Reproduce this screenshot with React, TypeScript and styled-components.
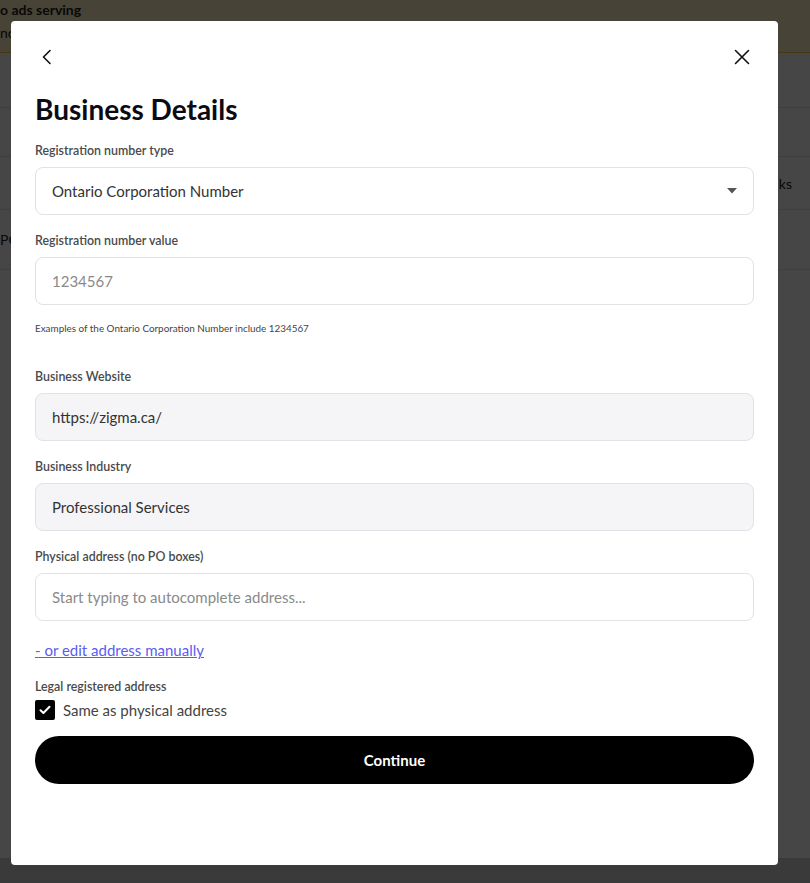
import React from "react";
import styled, { createGlobalStyle } from "styled-components";

const Global = createGlobalStyle`
  html, body { margin: 0; padding: 0; }
  body {
    width: 810px; height: 883px; overflow: hidden;
    font-family: Lato, "Open Sans", sans-serif;
    background: #f3f3f3;
  }
  * { box-sizing: border-box; }
`;

const Page = styled.div`
  width: 810px;
  height: 883px;
  display: flex;
  flex-direction: column;
  background: #f4f4f4;
  color: #222;
`;

const Banner = styled.div`
  height: 53px;
  background: #fff3c6;
  border-bottom: 1px solid #f0c44a;
  padding: 1px 0 0 0;
  display: flex;
  flex-direction: column;
  gap: 6px;
  font-size: 14px;
`;
const BannerTitle = styled.div`
  font-weight: 700;
`;
const BannerText = styled.div``;

const BgRows = styled.div`
  flex: 1;
  display: flex;
  flex-direction: column;
  background: #fafafa;
`;
const BgRow = styled.div<{ $h: number }>`
  height: ${(p) => p.$h}px;
  border-bottom: 1px solid #e2e2e2;
  display: flex;
  align-items: center;
  justify-content: space-between;
  font-size: 14px;
  padding: 0 18px 0 0;
`;
const BgFooter = styled.div`
  height: 25px;
  background: #cfcfcf;
  margin-top: auto;
`;

const Overlay = styled.div`
  position: fixed;
  inset: 0;
  background: rgba(0, 0, 0, 0.72);
`;

const Modal = styled.div`
  position: fixed;
  left: 11px;
  top: 21px;
  width: 767px;
  height: 844px;
  background: #fff;
  border-radius: 4px;
  padding: 24px 24px;
  display: flex;
  flex-direction: column;
`;

const TopBar = styled.div`
  display: flex;
  justify-content: space-between;
  align-items: center;
  height: 24px;
`;
const IconButton = styled.button`
  background: none;
  border: none;
  padding: 0;
  width: 24px;
  height: 24px;
  display: flex;
  align-items: center;
  justify-content: center;
  color: #111;
  cursor: pointer;
`;

const Title = styled.h1`
  margin: 23px 0 0 0;
  font-size: 28px;
  line-height: 34px;
  font-weight: 700;
  color: #0b0b14;
`;

const Label = styled.div<{ $mt?: number }>`
  margin-top: ${(p) => p.$mt ?? 0}px;
  font-size: 12.4px;
  line-height: 16px;
  font-weight: 600;
  color: #4a4a4a;
`;

const Field = styled.div<{ $disabled?: boolean; $mt?: number }>`
  margin-top: ${(p) => p.$mt ?? 8}px;
  height: 48px;
  border: 1px solid #e2e2e6;
  border-radius: 8px;
  background: ${(p) => (p.$disabled ? "#f5f5f7" : "#fff")};
  display: flex;
  align-items: center;
  justify-content: space-between;
  padding: 0 16px;
  font-size: 15px;
`;
const FieldText = styled.span<{ $placeholder?: boolean }>`
  color: ${(p) => (p.$placeholder ? "#8a8a8a" : "#333")};
`;

const Helper = styled.div`
  margin-top: 17px;
  font-size: 9.9px;
  line-height: 13px;
  color: #444;
`;

const Link = styled.a`
  margin-top: 20px;
  font-size: 15px;
  line-height: 19px;
  color: #5a5df0;
  text-decoration: underline;
  align-self: flex-start;
  cursor: pointer;
`;

const CheckRow = styled.label`
  margin-top: 5px;
  display: flex;
  align-items: center;
  gap: 8px;
  font-size: 15px;
  color: #444;
`;
const CheckBox = styled.span`
  width: 20px;
  height: 20px;
  background: #000;
  border-radius: 2px;
  display: flex;
  align-items: center;
  justify-content: center;
`;

const PrimaryButton = styled.button`
  margin-top: 16px;
  height: 48px;
  border: none;
  border-radius: 24px;
  background: #000;
  color: #fff;
  font-family: Lato, "Open Sans", sans-serif;
  font-size: 15px;
  font-weight: 700;
  cursor: pointer;
`;

export default function App() {
  return (
    <>
      <Global />
      <Page>
        <Banner>
          <BannerTitle>o ads serving</BannerTitle>
          <BannerText>nc</BannerText>
        </Banner>
        <BgRows>
          <BgRow $h={55} />
          <BgRow $h={49} />
          <BgRow $h={53}>
            <span />
            <span>ks</span>
          </BgRow>
          <BgRow $h={60}>
            <span>PO</span>
          </BgRow>
          <BgFooter />
        </BgRows>
      </Page>
      <Overlay />
      <Modal>
        <TopBar>
          <IconButton aria-label="Back">
            <svg width="24" height="24" viewBox="0 0 24 24" fill="none" stroke="#111" strokeWidth="1.6" strokeLinecap="round" strokeLinejoin="round">
              <path d="M15 5.5 L8.5 12 L15 18.5" />
            </svg>
          </IconButton>
          <IconButton aria-label="Close">
            <svg width="24" height="24" viewBox="0 0 24 24" fill="none" stroke="#111" strokeWidth="1.6" strokeLinecap="round">
              <path d="M5.5 5.5 L18.5 18.5 M18.5 5.5 L5.5 18.5" />
            </svg>
          </IconButton>
        </TopBar>
        <Title>Business Details</Title>

        <Label $mt={17}>Registration number type</Label>
        <Field>
          <FieldText>Ontario Corporation Number</FieldText>
          <svg width="10" height="6" viewBox="0 0 10 6">
            <path d="M0 0 H10 L5 5.5 Z" fill="#555" />
          </svg>
        </Field>

        <Label $mt={18}>Registration number value</Label>
        <Field>
          <FieldText $placeholder>1234567</FieldText>
        </Field>
        <Helper>Examples of the Ontario Corporation Number include 1234567</Helper>

        <Label $mt={34}>Business Website</Label>
        <Field $disabled>
          <FieldText>https://zigma.ca/</FieldText>
        </Field>

        <Label $mt={18}>Business Industry</Label>
        <Field $disabled>
          <FieldText>Professional Services</FieldText>
        </Field>

        <Label $mt={18}>Physical address (no PO boxes)</Label>
        <Field>
          <FieldText $placeholder>Start typing to autocomplete address...</FieldText>
        </Field>

        <Link>- or edit address manually</Link>

        <Label $mt={19}>Legal registered address</Label>
        <CheckRow>
          <CheckBox>
            <svg width="12" height="10" viewBox="0 0 12 10" fill="none" stroke="#fff" strokeWidth="2" strokeLinecap="round" strokeLinejoin="round">
              <path d="M1.5 5.2 L4.4 8 L10.5 1.8" />
            </svg>
          </CheckBox>
          Same as physical address
        </CheckRow>

        <PrimaryButton>Continue</PrimaryButton>
      </Modal>
    </>
  );
}
